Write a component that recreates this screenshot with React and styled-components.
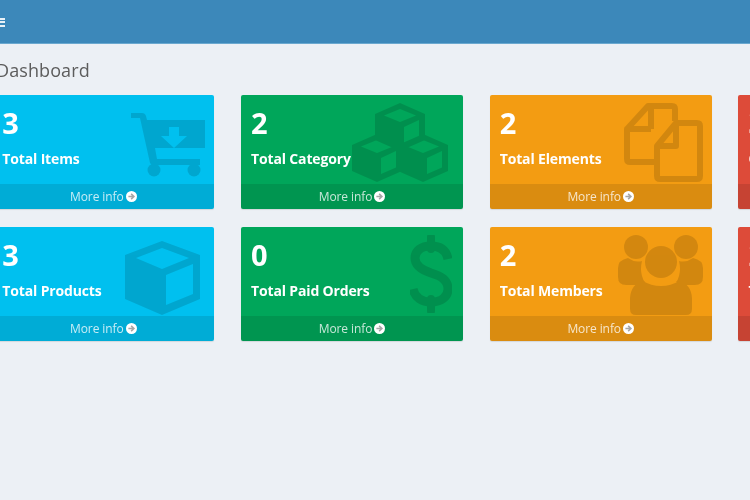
import React from "react";
import styled, { createGlobalStyle } from "styled-components";

const Global = createGlobalStyle`
  html, body { margin: 0; padding: 0; width: 750px; height: 500px; overflow: hidden; background: #ecf0f5; }
  body { font-family: "Open Sans", "Noto Sans", sans-serif; }
`;

const Page = styled.div`
  width: 750px;
  height: 500px;
  overflow: hidden;
  background: #ecf0f5;
  filter: blur(0.6px);
`;

const Header = styled.header`
  height: 44px;
  background: #3c88ba;
  border-bottom: 1px solid #6aa8cf;
  box-sizing: border-box;
  display: flex;
  align-items: center;
`;

const Burger = styled.div`
  width: 5px;
  height: 9px;
  margin-top: 1px;
  background: repeating-linear-gradient(#e8f1f7 0 2px, transparent 2px 3.5px);
`;

const Title = styled.h1`
  margin: 15px 0 14px -4px;
  font: 400 18px/22px "Open Sans", sans-serif;
  color: #5c5c5c;
  letter-spacing: 0.1px;
`;

const Grid = styled.main`
  display: grid;
  grid-template-columns: repeat(4, 222px);
  column-gap: 26.7px;
  row-gap: 18px;
  margin-left: -7.7px;
`;

const Card = styled.section`
  position: relative;
  height: 114px;
  background: ${(p) => p.$bg};
  color: #fff;
  border-radius: 2px;
  box-shadow: 0 1px 1px rgba(0, 0, 0, 0.1);
  overflow: hidden;
`;

const Body = styled.div`
  height: 89px;
  box-sizing: border-box;
  padding: 10px 10px 0 10px;
`;

const Num = styled.div`
  font: 700 29px/36px "Open Sans", sans-serif;
`;

const Label = styled.div`
  margin-top: 8px;
  font: 700 14px/20px "Open Sans", sans-serif;
  letter-spacing: -0.15px;
  white-space: nowrap;
  position: relative;
  z-index: 1;
`;

const Footer = styled.footer`
  height: 25px;
  background: rgba(0, 0, 0, 0.1);
  color: rgba(255, 255, 255, 0.78);
  display: flex;
  align-items: center;
  justify-content: center;
  gap: 2px;
  font: 400 12px/25px "Open Sans", sans-serif;
  letter-spacing: -0.1px;
`;

const Art = styled.svg`
  position: absolute;
  top: ${(p) => p.$top}px;
  right: ${(p) => p.$right}px;
  width: ${(p) => p.$w}px;
  height: ${(p) => p.$h}px;
  color: #000;
  opacity: 0.13;
`;

const Arrow = () => (
  <svg width="11" height="11" viewBox="0 0 12 12">
    <circle cx="6" cy="6" r="6" fill="#fff" />
    <path d="M2.6 6h5.400M5.600 3.200 8.600 6 5.600 8.800" fill="none" stroke="#888" strokeOpacity=".75" strokeWidth="1.7" />
  </svg>
);

const Cart = () => (
  <Art $top={18} $right={9} $w={74} $h={64} viewBox="0 0 74 64">
    <path fillRule="evenodd" fill="currentColor" d="M0 0h11q3 0 4 3l1 4h58v28H24l2 11h43v6H22q-2 0-3-2L9 5H0zM38 14v9h-8l13 12 13-12h-8v-9z" />
    <circle cx="23" cy="57" r="6.500" fill="currentColor" />
    <circle cx="63" cy="57" r="6.500" fill="currentColor" />
  </Art>
);

const Cube = ({ x, y }) => (
  <g transform={`translate(${x} ${y})`}>
    <path fillRule="evenodd" fill="currentColor" d="M25 0 50 11V37L25 48 0 37V11zM25 6 9 12.500 25 19 41 12.500zM29 24V40L44 33.500V17z" />
  </g>
);

const Cubes = () => (
  <Art $top={8} $right={15} $w={96} $h={79} viewBox="0 0 96 79">
    <Cube x={23} y={0} />
    <Cube x={0} y={31} />
    <Cube x={46} y={31} />
  </Art>
);

const Files = () => (
  <Art $top={8} $right={9} $w={79} $h={79} viewBox="0 0 79 79" fill="none" stroke="currentColor" strokeWidth="6" strokeLinejoin="round">
    <path d="M27 26V3h21q3 0 3 3v12M27 26H3v30q0 3 3 3h24M3 26 24 3h3" />
    <path d="M33 43 52 20h21q3 0 3 3v50q0 3-3 3H36q-3 0-3-3zM33 43h19V20" />
  </Art>
);

const Box = () => (
  <Art $top={14} $right={14} $w={75} $h={74} viewBox="0 0 75 74">
    <path fillRule="evenodd" fill="currentColor" d="M37 0 75 14V58L37 74 0 58V14zM37 7 11 17 37 28 64 17zM41 34V64L68 53V23z" />
  </Art>
);

const Dollar = () => (
  <Art $top={8} $right={11} $w={42} $h={78} viewBox="0 0 42 78" fill="none" stroke="currentColor">
    <path strokeWidth="9" d="M38 24C36 14 29 11 21 11 11 11 5 16 5 23c0 8 7 12 16 15 10 3 17 7 17 16 0 8-7 13-17 13-9 0-16-4-18-13" />
    <path strokeWidth="8" d="M21 2v12M21 64v12" strokeLinecap="round" />
  </Art>
);

const Users = () => (
  <Art $top={8} $right={9} $w={85} $h={80} viewBox="0 0 85 80">
    <g fill="currentColor">
      <circle cx="18" cy="12" r="12" />
      <circle cx="68" cy="12" r="12" />
      <path d="M10 23q7 5 14 3-2 8 0 15 1 4 3 6-6 1-9 3H8q-8 0-8-8V33q0-8 10-10z" />
      <path d="M75 23q-7 5-14 3 2 8 0 15-1 4-3 6 6 1 9 3h10q8 0 8-8V33q0-8-10-10z" />
      <circle cx="43" cy="27" r="16" />
      <path d="M25 46q8 5 18 5t18-5q12 3 13 17v11q0 6-6 6H18q-6 0-6-6V63q1-14 13-17z" />
    </g>
  </Art>
);

const cards = [
  { bg: "#00c0ef", n: 3, label: "Total Items", art: <Cart /> },
  { bg: "#00a65a", n: 2, label: "Total Category", art: <Cubes /> },
  { bg: "#f39c12", n: 2, label: "Total Elements", art: <Files /> },
  { bg: "#dd4b39", n: 3, label: "Out of Stock" },
  { bg: "#00c0ef", n: 3, label: "Total Products", art: <Box /> },
  { bg: "#00a65a", n: 0, label: "Total Paid Orders", art: <Dollar /> },
  { bg: "#f39c12", n: 2, label: "Total Members", art: <Users /> },
  { bg: "#dd4b39", n: 2, label: "Total Orders" },
];

export default function App() {
  return (
    <Page>
      <Global />
      <Header>
        <Burger />
      </Header>
      <Title>Dashboard</Title>
      <Grid>
        {cards.map((c) => (
          <Card key={c.label} $bg={c.bg}>
            {c.art}
            <Body>
              <Num>{c.n}</Num>
              <Label>{c.label}</Label>
            </Body>
            <Footer>
              More info <Arrow />
            </Footer>
          </Card>
        ))}
      </Grid>
    </Page>
  );
}
